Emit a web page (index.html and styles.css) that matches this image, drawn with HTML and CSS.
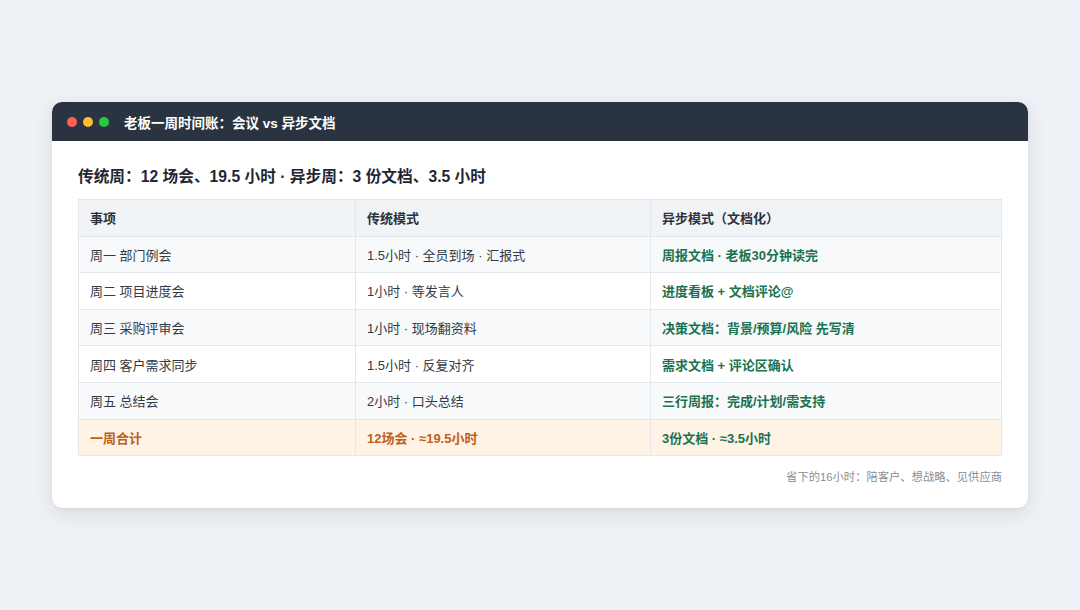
FILE: index.html
```html
<!DOCTYPE html>
<html lang="zh">
<head>
<meta charset="utf-8">
<link rel="stylesheet" href="styles.css">
</head>
<body>
<div class="stage">
  <div class="card">
    <div class="titlebar">
      <span class="dot red"></span>
      <span class="dot yellow"></span>
      <span class="dot green"></span>
      <span class="title">老板一周时间账：会议 vs 异步文档</span>
    </div>
    <div class="content">
      <h2 class="heading">传统周：12 场会、19.5 小时 · 异步周：3 份文档、3.5 小时</h2>
      <table class="tbl">
        <colgroup><col class="c1"><col class="c2"><col class="c3"></colgroup>
        <thead>
          <tr><th>事项</th><th>传统模式</th><th>异步模式（文档化）</th></tr>
        </thead>
        <tbody>
          <tr class="alt"><td>周一 部门例会</td><td>1.5小时 · 全员到场 · 汇报式</td><td class="async">周报文档 · 老板30分钟读完</td></tr>
          <tr><td>周二 项目进度会</td><td>1小时 · 等发言人</td><td class="async">进度看板 + 文档评论@</td></tr>
          <tr class="alt"><td>周三 采购评审会</td><td>1小时 · 现场翻资料</td><td class="async">决策文档：背景/预算/风险 先写清</td></tr>
          <tr><td>周四 客户需求同步</td><td>1.5小时 · 反复对齐</td><td class="async">需求文档 + 评论区确认</td></tr>
          <tr class="alt"><td>周五 总结会</td><td>2小时 · 口头总结</td><td class="async">三行周报：完成/计划/需支持</td></tr>
          <tr class="total"><td>一周合计</td><td>12场会 · ≈19.5小时</td><td class="async">3份文档 · ≈3.5小时</td></tr>
        </tbody>
      </table>
      <p class="note">省下的16小时：陪客户、想战略、见供应商</p>
    </div>
  </div>
</div>
</body>
</html>
```
FILE: styles.css
```css
* { box-sizing: border-box; }
html, body { margin: 0; padding: 0; }
body {
  background: #eef1f5;
  font-family: "Liberation Sans", "Noto Sans CJK SC", sans-serif;
  width: 1080px;
  height: 610px;
  overflow: hidden;
}
.stage {
  padding: 102px 52px 0 52px;
}
.card {
  width: 976px;
  height: 406px;
  background: #ffffff;
  border-radius: 10px;
  overflow: hidden;
  box-shadow: 0 6px 20px rgba(30, 41, 59, 0.10), 0 1px 3px rgba(30, 41, 59, 0.06);
}
.titlebar {
  height: 39px;
  background: #2a3441;
  display: flex;
  align-items: center;
  padding-left: 15px;
  gap: 6px;
}
.dot {
  width: 10px;
  height: 10px;
  border-radius: 50%;
  display: inline-block;
}
.dot.red { background: #ff5f57; }
.dot.yellow { background: #febc2e; }
.dot.green { background: #28c840; }
.title {
  margin-left: 9px;
  color: #ffffff;
  font-weight: bold;
  font-size: 13.5px;
}
.content {
  padding: 25px 26px 0 26px;
}
.heading {
  margin: 0 0 11px 0;
  font-size: 15.7px;
  font-weight: bold;
  color: #1f2733;
  line-height: 22px;
}
.tbl {
  width: 923px;
  border-collapse: collapse;
  table-layout: fixed;
  font-size: 13px;
}
.c1 { width: 277px; }
.c2 { width: 295px; }
.c3 { width: 351px; }
.tbl tr { height: 36.6px; }
.tbl th, .tbl td {
  border: 1px solid #e3e8ee;
  padding: 0 11px;
  text-align: left;
  vertical-align: middle;
  color: #333a44;
}
.tbl th {
  background: #f1f4f7;
  font-weight: bold;
  color: #2b323c;
}
.tbl tr.alt td { background: #f7f9fb; }
.tbl td.async {
  color: #1a7250;
  font-weight: bold;
}
.tbl tr.total td {
  background: #fff3e5;
  color: #c0601a;
  font-weight: bold;
}
.tbl tr.total td.async { color: #1a7250; }
.note {
  margin: 12px 0 0 0;
  text-align: right;
  font-size: 11.3px;
  color: #888e97;
}
```
